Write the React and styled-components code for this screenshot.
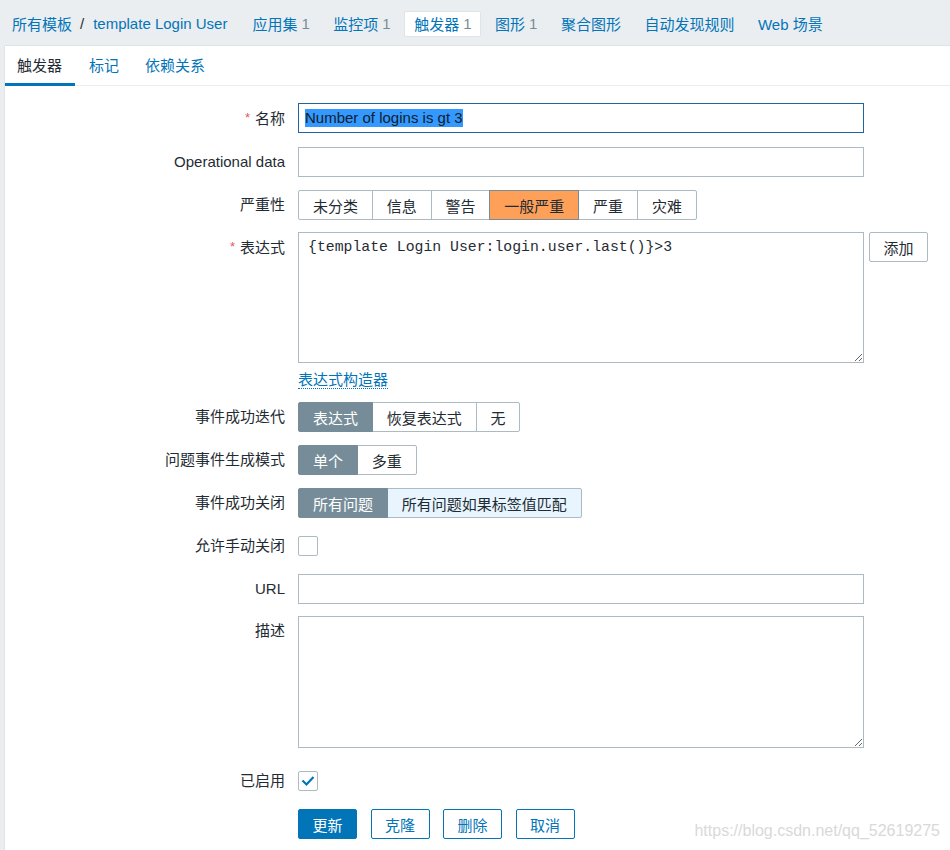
import React from 'react';
import styled, {createGlobalStyle, css} from 'styled-components';

const GlobalStyle = createGlobalStyle`
  html, body {
    margin: 0;
    padding: 0;
    background: #ebeef1;
    font-family: Arial, "Liberation Sans", "Noto Sans CJK SC", sans-serif;
    font-size: 15px;
    color: #1f2c33;
  }
  * {
    box-sizing: border-box;
  }
`;

const Page = styled.div`
  position: relative;
  min-height: 850px;
`;

const TopNav = styled.nav`
  display: flex;
  align-items: center;
  height: 45px;
  padding: 2px 0 0 12px;
`;

const Crumb = styled.a`
  color: #0275b8;
  text-decoration: none;
`;

const Separator = styled.span`
  margin: 0 9px 0 8px;
  color: #1f2c33;
`;

const NavList = styled.div`
  display: flex;
  align-items: center;
  gap: 4.5px;
  margin-left: 15px;
`;

const NavItem = styled.a`
  display: flex;
  align-items: center;
  height: 26px;
  padding: 0 8px 0 9px;
  color: #0275b8;
  text-decoration: none;
  border: 1px solid transparent;
  border-radius: 2px;

  ${({$active}) => $active && css`
    background: #fff;
    border-color: #dfe4e7;
  `}
`;

const Count = styled.span`
  color: #768d99;
  margin-left: 4px;
`;

const Panel = styled.main`
  margin-left: 4px;
  min-height: 805px;
  background: #fff;
  border-left: 1px solid #dfe4e7;
  border-top: 1px solid #dfe4e7;
`;

const Tabs = styled.div`
  display: flex;
  height: 40px;
  border-bottom: 1px solid #ebeef1;
`;

const Tab = styled.a`
  display: flex;
  align-items: center;
  padding: 0 12px;
  height: 40px;
  color: ${({$active}) => ($active ? '#1f2c33' : '#0275b8')};
  border-bottom: 3px solid ${({$active}) => ($active ? '#0275b8' : 'transparent')};
  text-decoration: none;
  margin-right: 2px;

  &:first-child {
    padding-right: 13px;
  }
`;

const Form = styled.form`
  padding-top: 17px;
`;

const Row = styled.div`
  display: flex;
  align-items: flex-start;
  gap: 13px;
  margin-bottom: ${({$gap}) => ($gap ?? 13)}px;
`;

const Label = styled.label`
  width: 280px;
  flex-shrink: 0;
  text-align: right;
  line-height: 30px;
`;

const Asterisk = styled.span`
  color: #e45959;
  font-size: 13px;
  margin-right: 5px;
  vertical-align: 2px;
`;

const inputBox = css`
  width: 566px;
  border: 1px solid #acbbc2;
  background: #fff;
  font-family: Arial, "Liberation Sans", "Noto Sans CJK SC", sans-serif;
  font-size: 15px;
  color: #1f2c33;
  outline: none;
`;

const TextInput = styled.input`
  ${inputBox}
  height: 30px;
  padding: 0 6px;
`;

const FocusedInput = styled.div`
  ${inputBox}
  height: 30px;
  padding: 0 6px;
  border-color: #1f65a0;
  display: flex;
  align-items: center;
`;

const Selected = styled.span`
  background: #3399ff;
  color: #12202c;
  line-height: 18px;
`;

const TextArea = styled.textarea`
  ${inputBox}
  height: ${({$h}) => $h}px;
  padding: 5px 9px;
  resize: vertical;
  display: block;
  line-height: 18px;
  font-family: ${({$mono}) => ($mono ? '"Liberation Mono", "DejaVu Sans Mono", monospace' : 'inherit')};
  font-size: ${({$mono}) => ($mono ? '14.8px' : '15px')};
`;

const SegGroup = styled.div`
  display: inline-flex;
  height: 30px;
`;

const Seg = styled.button`
  height: 30px;
  padding: 0 13.9px;
  border: 1px solid #acbbc2;
  margin-left: -1px;
  background: #fff;
  color: #1f2c33;
  font-family: inherit;
  font-size: 15px;
  cursor: pointer;

  &:first-child {
    margin-left: 0;
    border-radius: 2px 0 0 2px;
  }
  &:last-child {
    border-radius: 0 2px 2px 0;
  }

  ${({$tone}) => $tone === 'orange' && css`
    background: #ffa059;
    border-color: #768d99;
    position: relative;
    z-index: 1;
  `}
  ${({$tone}) => $tone === 'gray' && css`
    background: #768d99;
    border-color: #768d99;
    color: #fff;
    position: relative;
    z-index: 1;
  `}
  ${({$tone}) => $tone === 'hover' && css`
    background: #e8f5ff;
  `}
`;

const Field = styled.div`
  display: flex;
  flex-direction: column;
`;

const BuilderLink = styled.a`
  align-self: flex-start;
  margin-top: 8px;
  line-height: 17px;
  color: #0275b8;
  text-decoration: none;
  border-bottom: 1px dotted #0275b8;
`;

const Button = styled.button`
  height: 30px;
  padding: 0 13.5px;
  border: 1px solid ${({$plain}) => ($plain ? '#acbbc2' : '#0275b8')};
  border-radius: 2px;
  background: ${({$primary}) => ($primary ? '#0275b8' : '#fff')};
  color: ${({$primary, $plain}) => ($primary ? '#fff' : $plain ? '#1f2c33' : '#0275b8')};
  font-family: inherit;
  font-size: 15px;
  cursor: pointer;
`;

const Checkbox = styled.span`
  width: 20px;
  height: 20px;
  margin-top: 5px;
  border: 1px solid #acbbc2;
  border-radius: 2px;
  display: flex;
  align-items: center;
  justify-content: center;
  background: #fff;
`;

const Actions = styled.div`
  display: flex;
  gap: 13.5px;
  margin-left: 293px;
`;

const Watermark = styled.div`
  position: absolute;
  right: 10px;
  bottom: 10px;
  font-family: Arial, "Liberation Sans", sans-serif;
  font-size: 16px;
  color: #d9d9d9;
`;

const severities = ['未分类', '信息', '警告', '一般严重', '严重', '灾难'];

const Check = () => (
  <svg width="14" height="12" viewBox="0 0 14 12">
    <polyline points="1.5,5.5 5.5,9.5 12.5,2" fill="none" stroke="#0275b8" strokeWidth="2.2"/>
  </svg>
);

export default function App() {
  return (
    <Page>
      <GlobalStyle/>
      <TopNav>
        <Crumb href="#">所有模板</Crumb>
        <Separator>/</Separator>
        <Crumb href="#">template Login User</Crumb>
        <NavList>
          <NavItem href="#">应用集<Count>1</Count></NavItem>
          <NavItem href="#">监控项<Count>1</Count></NavItem>
          <NavItem href="#" $active>触发器<Count>1</Count></NavItem>
          <NavItem href="#">图形<Count>1</Count></NavItem>
          <NavItem href="#">聚合图形</NavItem>
          <NavItem href="#">自动发现规则</NavItem>
          <NavItem href="#">Web 场景</NavItem>
        </NavList>
      </TopNav>
      <Panel>
        <Tabs>
          <Tab $active>触发器</Tab>
          <Tab href="#">标记</Tab>
          <Tab href="#">依赖关系</Tab>
        </Tabs>
        <Form onSubmit={(e) => e.preventDefault()}>
          <Row>
            <Label><Asterisk>*</Asterisk>名称</Label>
            <FocusedInput><Selected>Number of logins is gt 3</Selected></FocusedInput>
          </Row>
          <Row>
            <Label>Operational data</Label>
            <TextInput defaultValue=""/>
          </Row>
          <Row $gap={12}>
            <Label>严重性</Label>
            <SegGroup>
              {severities.map((s) => (
                <Seg type="button" key={s} $tone={s === '一般严重' ? 'orange' : undefined}>{s}</Seg>
              ))}
            </SegGroup>
          </Row>
          <Row>
            <Label><Asterisk>*</Asterisk>表达式</Label>
            <Field>
              <TextArea $mono $h={131} defaultValue="{template Login User:login.user.last()}>3"/>
              <BuilderLink href="#">表达式构造器</BuilderLink>
            </Field>
            <Button type="button" $plain style={{marginLeft: -8}}>添加</Button>
          </Row>
          <Row>
            <Label>事件成功迭代</Label>
            <SegGroup>
              <Seg type="button" $tone="gray">表达式</Seg>
              <Seg type="button">恢复表达式</Seg>
              <Seg type="button">无</Seg>
            </SegGroup>
          </Row>
          <Row>
            <Label>问题事件生成模式</Label>
            <SegGroup>
              <Seg type="button" $tone="gray">单个</Seg>
              <Seg type="button">多重</Seg>
            </SegGroup>
          </Row>
          <Row>
            <Label>事件成功关闭</Label>
            <SegGroup>
              <Seg type="button" $tone="gray">所有问题</Seg>
              <Seg type="button" $tone="hover">所有问题如果标签值匹配</Seg>
            </SegGroup>
          </Row>
          <Row>
            <Label>允许手动关闭</Label>
            <Checkbox/>
          </Row>
          <Row $gap={12}>
            <Label>URL</Label>
            <TextInput defaultValue=""/>
          </Row>
          <Row $gap={18}>
            <Label>描述</Label>
            <TextArea $h={132} defaultValue=""/>
          </Row>
          <Row>
            <Label>已启用</Label>
            <Checkbox><Check/></Checkbox>
          </Row>
          <Actions>
            <Button type="button" $primary>更新</Button>
            <Button type="button">克隆</Button>
            <Button type="button">删除</Button>
            <Button type="button">取消</Button>
          </Actions>
        </Form>
      </Panel>
      <Watermark>https://blog.csdn.net/qq_52619275</Watermark>
    </Page>
  );
}
